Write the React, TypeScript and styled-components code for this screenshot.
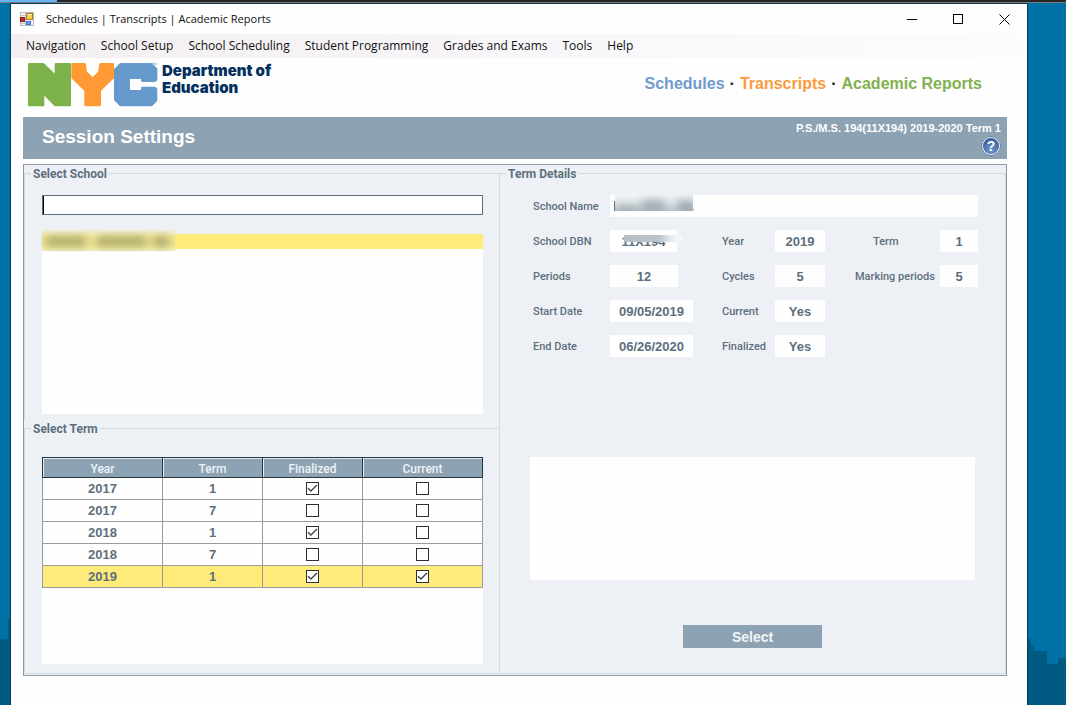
import React, { useState } from "react";
import styled, { createGlobalStyle } from "styled-components";

const color = {
  slate: "#8da2b3",
  panel: "#edf1f5",
  ink: "#5d6f7d",
  line: "#d3dade",
  grid: "#9b9b9f",
  head: "#26363f",
  highlight: "#feeb79",
  desktop: "#0071a6",
  skyline: "#005a82",
};
const sans = '"Liberation Sans", Arial, sans-serif';
const narrow = 'Roboto, "Arial Narrow", sans-serif';
const ui = '"Open Sans", "Segoe UI", sans-serif';

const GlobalStyle = createGlobalStyle`
  *, *::before, *::after { box-sizing: border-box; }
  body { margin: 0; background: ${color.desktop}; font-family: ${sans}; color: ${color.ink}; }
  button, input, textarea { font: inherit; color: inherit; margin: 0; border-radius: 0; }
`;

const Desktop = styled.div`
  display: flex;
  flex-direction: column;
  min-height: 100vh;
`;

const HostBar = styled.div`
  height: 3px;
  background: linear-gradient(to right, #62b4f4 57px, #262626 57px);
  border-bottom: 1px solid #77797a;
`;

const Workspace = styled.div`
  flex: 1;
  display: grid;
  grid-template-columns: 10px minmax(0, 1fr) 38px;
`;

const Wallpaper = styled.div`
  display: flex;
  flex-direction: column;
  justify-content: flex-end;
  svg { display: block; }
`;

const Window = styled.main`
  background: #fefefe;
  border: 1px solid #0b3a55;
  border-bottom: 0;
  min-width: 0;
`;

const TitleBar = styled.header`
  display: flex;
  align-items: center;
  height: 30px;
  padding-left: 9px;
  font: 11px/16px ${ui};
  color: #111;
`;

const WindowTitle = styled.h1`
  flex: 1;
  margin: 0 0 0 12px;
  font: inherit;
`;

const WindowButton = styled.button`
  display: grid;
  place-items: center;
  width: 46px;
  height: 28px;
  padding: 0;
  border: 0;
  background: none;
`;

const MenuBar = styled.nav`
  display: flex;
  align-items: center;
  gap: 15px;
  height: 24px;
  margin-right: 4px;
  padding-left: 15px;
  background: linear-gradient(to right, #f3eff0, #f8f6f9 50%, #fcfbfe);
  font: 12px/16px ${ui};
`;

const MenuButton = styled.button`
  padding: 0;
  border: 0;
  background: none;
  color: #111;
  white-space: nowrap;
`;

const Brand = styled.div`
  display: flex;
  align-items: flex-start;
  height: 59px;
  padding: 4px 45px 0 17px;
`;

const BrandName = styled.p`
  flex: 1;
  margin: 0 0 0 4px;
  font: 900 15px/17px Inter, sans-serif;
  color: #04305e;
`;

const Sections = styled.nav`
  display: flex;
  gap: 5px;
  margin-top: 13px;
  font: bold 16px/18px ${sans};
  color: #222;
`;

const SectionLink = styled.a<{ $tint: string }>`
  color: ${(p) => p.$tint};
  text-decoration: none;
`;

const Content = styled.div`
  padding: 0 20px 29px 12px;
`;

const Banner = styled.section`
  display: flex;
  justify-content: space-between;
  height: 42px;
  margin-bottom: 5px;
  padding: 0 6px 0 19px;
  background: ${color.slate};
  color: #fff;
`;

const BannerTitle = styled.h2`
  margin: 0;
  font: bold 19px/40px ${sans};
`;

const SessionInfo = styled.div`
  display: flex;
  flex-direction: column;
  align-items: flex-end;
  gap: 1px;
  padding-top: 4px;
  font: bold 11px/14px ${sans};
`;

const HelpButton = styled.button`
  width: 20px;
  height: 20px;
  padding: 0;
  border: 2px solid #e9eff7;
  border-radius: 50%;
  outline: 1px solid #5b7594;
  outline-offset: -1px;
  background: radial-gradient(circle at 50% 75%, #6f97cf, #3d609c 75%);
  color: #fff;
  font: bold 14px/16px ${sans};
`;

const Panel = styled.form`
  display: grid;
  grid-template-columns: minmax(0, 475fr) minmax(0, 507fr);
  padding-bottom: 1px;
  border: 1px solid #8c9aa5;
  background: ${color.panel};
`;

const Column = styled.div`
  display: flex;
  flex-direction: column;
`;

const Group = styled.fieldset<{ $side: "left" | "right"; $last?: boolean }>`
  min-width: 0;
  margin: 0;
  padding: ${(p) => (p.$side === "left" ? "0 16px 0 17px" : "0 27px 0 30px")};
  padding-bottom: ${(p) => (p.$side === "right" ? 25 : p.$last ? 9 : 6)}px;
  border: 1px solid ${color.line};
  border-right-width: ${(p) => (p.$side === "left" ? 0 : 1)}px;
  border-bottom-width: ${(p) => (p.$last ? 1 : 0)}px;
`;

const Legend = styled.legend<{ $side: "left" | "right" }>`
  height: 16px;
  margin-left: ${(p) => (p.$side === "left" ? -11 : -24)}px;
  padding: 0 2px;
  font: bold 12px/18px ${narrow};
`;

const SearchBox = styled.input`
  display: block;
  width: 100%;
  height: 20px;
  margin-top: 14px;
  padding: 0 2px;
  border: 1px solid #5b6f78;
  background: #fff;
  box-shadow: inset 1px 0 0 #000;
  font: bold 13px/16px ${sans};
  outline: none;
`;

const SchoolList = styled.ul`
  height: 180px;
  margin: 19px 0 0;
  padding: 0;
  background: #fefefe;
  list-style: none;
`;

const SchoolItem = styled.li`
  position: relative;
  height: 15px;
  background: ${color.highlight};
`;

const Redaction = styled.svg<{ $x: number; $y: number }>`
  position: absolute;
  left: ${(p) => p.$x}px;
  top: ${(p) => p.$y}px;
  pointer-events: none;
`;

const TermTableBox = styled.div`
  height: 207px;
  margin-top: 21px;
  background: #fefefe;
`;

const TermTable = styled.table`
  width: 100%;
  table-layout: fixed;
  border-collapse: separate;
  border-spacing: 0;
  text-align: center;
`;

const HeadCell = styled.th`
  height: 21px;
  padding: 2px 0 0;
  border: 1px solid ${color.head};
  border-left-width: 0;
  background: ${color.slate};
  box-shadow: inset 1px 1px 0 #e4eaee;
  color: #eef3f7;
  font: 500 12px/16px ${narrow};
  &:first-child { border-left-width: 1px; }
`;

const TermRow = styled.tr<{ $selected: boolean }>`
  background: ${(p) => (p.$selected ? color.highlight : "#fefefe")};
`;

const Cell = styled.td`
  height: 22px;
  padding: 0;
  border: solid ${color.grid};
  border-width: 0 1px 1px 0;
  font: bold 13px/16px ${sans};
  &:first-child { border-left-width: 1px; }
`;

const Tick = styled.label`
  position: relative;
  display: block;
  width: 13px;
  height: 13px;
  margin: 0 auto;
  svg { position: absolute; inset: 0; pointer-events: none; }
`;

const TickBox = styled.input`
  appearance: none;
  display: block;
  width: 13px;
  height: 13px;
  border: 1px solid #2f2f2f;
  background: #fff;
  & + svg { visibility: hidden; }
  &:checked + svg { visibility: visible; }
`;

const Details = styled.div`
  display: grid;
  grid-template-columns:
    minmax(0, 77fr) minmax(0, 112fr) minmax(0, 53fr)
    minmax(0, 80fr) minmax(0, 85fr) minmax(0, 38fr);
  grid-auto-rows: 22px;
  row-gap: 13px;
  align-items: center;
  padding: 14px 0 0 3px;
`;

const FieldLabel = styled.label<{ $center?: boolean }>`
  font: 500 11px/22px ${narrow};
  white-space: nowrap;
  padding: 1px 0 0 ${(p) => (p.$center ? 18 : 0)}px;
`;

const FieldBox = styled.div<{ $wide?: boolean }>`
  position: relative;
  min-width: 0;
  grid-column: ${(p) => (p.$wide ? "2 / -1" : "auto")};
`;

const Field = styled.input<{ $width?: number }>`
  display: block;
  width: ${(p) => (p.$width ? `${p.$width}px` : "100%")};
  height: 22px;
  padding: 0;
  border: 0;
  background: #fefefe;
  text-align: center;
  font: bold 13px/16px ${sans};
  outline: none;
`;

const RowEnd = styled.span`
  grid-column: span 2;
`;

const NotesArea = styled.div`
  display: flex;
  flex-direction: column;
  align-items: center;
  gap: 45px;
  margin-top: 100px;
  padding-right: 3px;
`;

const Notes = styled.textarea`
  display: block;
  width: 100%;
  height: 123px;
  border: 0;
  background: #fefefe;
  resize: none;
`;

const SelectButton = styled.button`
  width: 139px;
  height: 23px;
  padding: 2px 0 0;
  border: 0;
  background: ${color.slate};
  color: #f1f5f8;
  font: bold 14px/21px ${sans};
`;

const AppIcon = () => (
  <svg width="14" height="14" viewBox="0 0 14 14" aria-hidden="true">
    <rect x="0.5" y="0.5" width="13" height="13" fill="#f4f4f4" stroke="#b9b9b9" />
    <path d="M5.5 0v14M0 3.5h6M0 11.5h6" stroke="#c4c4c4" />
    <rect x="0.5" y="5.5" width="4" height="4" fill="#c8282c" stroke="#8e1a1c" />
    <rect x="6.5" y="1.5" width="6" height="6" fill="#f8cf4c" stroke="#a9801c" />
    <path d="M7 2.5h5" stroke="#fdeeb0" />
    <rect x="6.5" y="9.5" width="4" height="3" fill="#6fa2ee" stroke="#3f6fc8" />
  </svg>
);

const NycLogo = () => (
  <svg width="130" height="45" viewBox="0 0 390 135" role="img" aria-label="NYC">
    <g strokeWidth="8" strokeLinejoin="round">
      <path
        fill="#7db24a"
        stroke="#7db24a"
        d="M4 7H46L84 44V7H125V129H82L45 92V129H4Z"
      />
      <path
        fill="#ff9933"
        stroke="#ff9933"
        d="M134 7H170L173 31L194 51L214 31L218 7H254V47L215 85V129H173V85L134 47Z"
      />
      <path
        fill="#6699cc"
        stroke="#6699cc"
        d="M278 7H370L384 21V53L380 56H343V47H302V88H343V78H380L384 82V115L370 129H278L262 113V23Z"
      />
    </g>
    <path d="M371 3h7M374 3v6M380 9V3l3 4l3-4v6" stroke="#8fb0d6" strokeWidth="2" fill="none" />
  </svg>
);

const CheckMark = () => (
  <svg width="13" height="13" viewBox="0 0 13 13" aria-hidden="true">
    <path d="M2 6.2L4.9 9.1L11 3" fill="none" stroke="#444" strokeWidth="1.4" />
  </svg>
);

const menus = [
  "Navigation",
  "School Setup",
  "School Scheduling",
  "Student Programming",
  "Grades and Exams",
  "Tools",
  "Help",
];

const initialTerms = [
  { year: 2017, term: 1, finalized: true, current: false },
  { year: 2017, term: 7, finalized: false, current: false },
  { year: 2018, term: 1, finalized: true, current: false },
  { year: 2018, term: 7, finalized: false, current: false },
  { year: 2019, term: 1, finalized: true, current: true },
];

function TermField(props: {
  id: string;
  label: string;
  value: string;
  width?: number;
  center?: boolean;
  children?: React.ReactNode;
}) {
  return (
    <>
      <FieldLabel htmlFor={props.id} $center={props.center}>
        {props.label}
      </FieldLabel>
      <FieldBox>
        <Field id={props.id} $width={props.width} value={props.value} readOnly />
        {props.children}
      </FieldBox>
    </>
  );
}

export default function App() {
  const [selected, setSelected] = useState(4);

  return (
    <Desktop>
      <GlobalStyle />
      <HostBar />
      <Workspace>
        <Wallpaper>
          <svg width="10" height="86" viewBox="0 0 10 86">
            <path d="M0 20H8V0H10V86H0Z" fill={color.skyline} />
          </svg>
        </Wallpaper>
        <Window>
          <TitleBar>
            <AppIcon />
            <WindowTitle>Schedules | Transcripts | Academic Reports</WindowTitle>
            <WindowButton aria-label="Minimize">
              <svg width="11" height="11">
                <path d="M0 5.5h10" stroke="#000" />
              </svg>
            </WindowButton>
            <WindowButton aria-label="Maximize">
              <svg width="11" height="11">
                <rect x="0.5" y="0.5" width="9" height="9" fill="none" stroke="#000" />
              </svg>
            </WindowButton>
            <WindowButton aria-label="Close">
              <svg width="11" height="11">
                <path d="M0.5 0.5l10 10M10.5 0.5l-10 10" stroke="#000" />
              </svg>
            </WindowButton>
          </TitleBar>
          <MenuBar>
            {menus.map((name) => (
              <MenuButton key={name}>{name}</MenuButton>
            ))}
          </MenuBar>
          <Brand>
            <NycLogo />
            <BrandName>
              Department of
              <br />
              Education
            </BrandName>
            <Sections>
              <SectionLink href="#schedules" $tint="#6f9bcd">Schedules</SectionLink>
              <span>·</span>
              <SectionLink href="#transcripts" $tint="#fb9a3c">Transcripts</SectionLink>
              <span>·</span>
              <SectionLink href="#reports" $tint="#83b150">Academic Reports</SectionLink>
            </Sections>
          </Brand>
          <Content>
            <Banner>
              <BannerTitle>Session Settings</BannerTitle>
              <SessionInfo>
                <span>P.S./M.S. 194(11X194) 2019-2020 Term 1</span>
                <HelpButton aria-label="Help">?</HelpButton>
              </SessionInfo>
            </Banner>
            <Panel onSubmit={(e) => e.preventDefault()}>
              <Column>
                <Group $side="left">
                  <Legend $side="left">Select School</Legend>
                  <SearchBox aria-label="Search school" />
                  <SchoolList>
                    <SchoolItem>
                      <Redaction $x={-2} $y={-6} width="136" height="24" aria-hidden="true">
                        <defs>
                          <filter id="soft" x="-20%" y="-60%" width="140%" height="220%">
                            <feGaussianBlur stdDeviation="4" />
                          </filter>
                          <linearGradient id="band" x1="0" y1="0" x2="0" y2="1">
                            <stop offset="0" stopColor="#edf1f0" />
                            <stop offset="0.4" stopColor="#f1e595" />
                            <stop offset="0.75" stopColor="#f1e590" />
                            <stop offset="1" stopColor="#f3eebc" />
                          </linearGradient>
                        </defs>
                        <rect x="2" width="133" height="23" fill="url(#band)" />
                        <g fill="#a5a56c" filter="url(#soft)">
                          <rect x="6" y="9" width="40" height="9" />
                          <rect x="57" y="9" width="49" height="9" />
                          <rect x="113" y="9" width="16" height="9" />
                        </g>
                      </Redaction>
                    </SchoolItem>
                  </SchoolList>
                </Group>
                <Group $side="left" $last>
                  <Legend $side="left">Select Term</Legend>
                  <TermTableBox>
                    <TermTable>
                      <colgroup>
                        <col style={{ width: 121 }} />
                        <col style={{ width: 100 }} />
                        <col style={{ width: 100 }} />
                        <col style={{ width: 120 }} />
                      </colgroup>
                      <thead>
                        <tr>
                          <HeadCell>Year</HeadCell>
                          <HeadCell>Term</HeadCell>
                          <HeadCell>Finalized</HeadCell>
                          <HeadCell>Current</HeadCell>
                        </tr>
                      </thead>
                      <tbody>
                        {initialTerms.map((t, i) => (
                          <TermRow key={i} $selected={i === selected} onClick={() => setSelected(i)}>
                            <Cell>{t.year}</Cell>
                            <Cell>{t.term}</Cell>
                            <Cell>
                              <Tick>
                                <TickBox type="checkbox" aria-label="Finalized" defaultChecked={t.finalized} />
                                <CheckMark />
                              </Tick>
                            </Cell>
                            <Cell>
                              <Tick>
                                <TickBox type="checkbox" aria-label="Current" defaultChecked={t.current} />
                                <CheckMark />
                              </Tick>
                            </Cell>
                          </TermRow>
                        ))}
                      </tbody>
                    </TermTable>
                  </TermTableBox>
                </Group>
              </Column>
              <Group $side="right" $last>
                <Legend $side="right">Term Details</Legend>
                <Details>
                  <FieldLabel htmlFor="name">School Name</FieldLabel>
                  <FieldBox $wide>
                    <Field id="name" readOnly value="" />
                    <Redaction $x={4} $y={-2} width="82" height="20" aria-hidden="true">
                      <defs>
                        <linearGradient id="fade" x1="0" y1="0" x2="0" y2="1">
                          <stop offset="0" stopColor="#f3f5f6" />
                          <stop offset="0.5" stopColor="#e1e5e8" />
                          <stop offset="1" stopColor="#bcc6cc" />
                        </linearGradient>
                        <clipPath id="edge">
                          <rect x="1" width="78" height="18" />
                        </clipPath>
                        <filter id="haze" x="-30%" y="-80%" width="160%" height="260%">
                          <feGaussianBlur stdDeviation="4" />
                        </filter>
                      </defs>
                      <g clipPath="url(#edge)">
                        <rect x="1" width="78" height="18" fill="url(#fade)" />
                        <g fill="#98a5ad" filter="url(#haze)">
                          <rect x="4" y="14" width="18" height="6" />
                          <rect x="28" y="8" width="22" height="10" />
                          <rect x="64" y="8" width="16" height="12" />
                        </g>
                      </g>
                      <rect x="0" y="8" width="1" height="10" fill="#5d6f7d" />
                      <rect x="79" y="16" width="1" height="1" fill="#8090a0" />
                    </Redaction>
                  </FieldBox>

                  <TermField id="dbn" label="School DBN" value="11X194" width={67}>
                    <Redaction $x={14} $y={5} width="58" height="8" aria-hidden="true">
                      <defs>
                        <linearGradient id="strip">
                          <stop offset="0" stopColor="#b5bfc6" />
                          <stop offset="0.6" stopColor="#bac3c9" />
                          <stop offset="0.8" stopColor="#e6eaed" />
                          <stop offset="1" stopColor="#f8f9fa" />
                        </linearGradient>
                      </defs>
                      <rect width="58" height="7" fill="url(#strip)" />
                    </Redaction>
                  </TermField>
                  <TermField id="year" label="Year" value="2019" width={50} />
                  <TermField id="term" label="Term" value="1" center />

                  <TermField id="periods" label="Periods" value="12" width={68} />
                  <TermField id="cycles" label="Cycles" value="5" width={50} />
                  <TermField id="marking" label="Marking periods" value="5" />

                  <TermField id="start" label="Start Date" value="09/05/2019" width={83} />
                  <TermField id="current" label="Current" value="Yes" width={50} />
                  <RowEnd />

                  <TermField id="end" label="End Date" value="06/26/2020" width={83} />
                  <TermField id="finalized" label="Finalized" value="Yes" width={50} />
                  <RowEnd />
                </Details>
                <NotesArea>
                  <Notes aria-label="Notes" readOnly />
                  <SelectButton type="submit">Select</SelectButton>
                </NotesArea>
              </Group>
            </Panel>
          </Content>
        </Window>
        <Wallpaper>
          <svg width="38" height="66" viewBox="0 0 38 66">
            <path d="M0 0H3V6H6V12H19V25H30V19H38V66H0Z" fill={color.skyline} />
          </svg>
        </Wallpaper>
      </Workspace>
    </Desktop>
  );
}
